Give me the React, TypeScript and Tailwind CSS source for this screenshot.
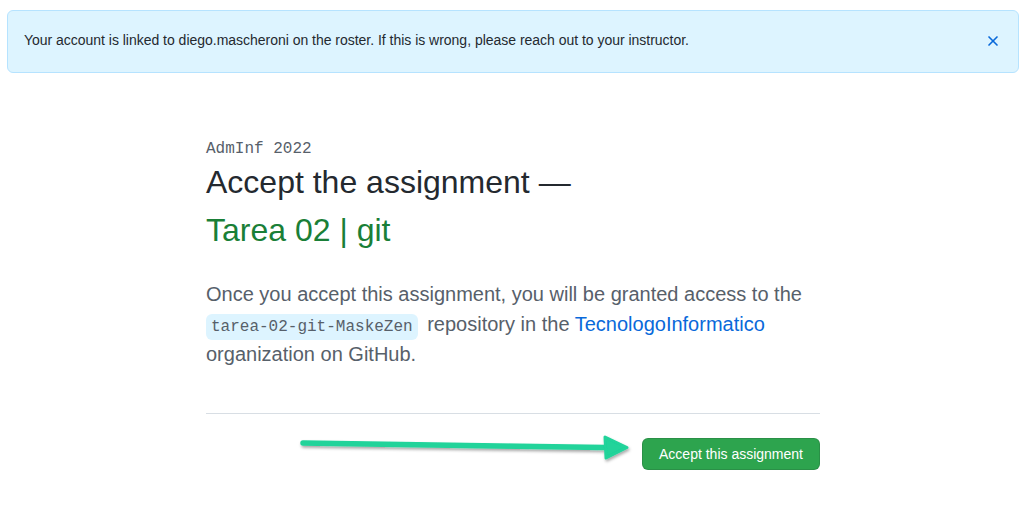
import { X } from "lucide-react";

const App = () => {
  return (
    <div className="min-h-screen bg-white" style={{ fontFamily: '"Liberation Sans", Arial, sans-serif' }}>
      {/* flash banner */}
      <div className="mt-[10px] ml-[7px] mr-[10px] h-[63px] flex items-center justify-between rounded-md border border-[#b6e3ff] bg-[#ddf4ff] pl-[16px] pr-[17px] pb-[2px]">
        <p className="text-[14px] tracking-[-0.02px] text-[#24292f]">
          Your account is linked to diego.mascheroni on the roster. If this is wrong, please reach out to your instructor.
        </p>
        <button className="text-[#0969da]" aria-label="Dismiss">
          <X size={16} strokeWidth={2.5} />
        </button>
      </div>

      <main className="w-[614px] ml-[206px] pt-[67px]">
        <p
          className="text-[16px] leading-[18px] text-[#57606a]"
          style={{ fontFamily: '"Liberation Mono", "Courier New", monospace' }}
        >
          AdmInf 2022
        </p>
        <h1 className="text-[32px] leading-[48px] text-[#24292f]">
          Accept the assignment —<br />
          <span className="text-[#1a7f37]">Tarea 02 | git</span>
        </h1>

        <p className="mt-[25px] text-[20px] leading-[30px] text-[#57606a]">
          Once you accept this assignment, you will be granted access to the{" "}
          <code
            className="rounded-md bg-[#ddf4ff] px-[5px] py-[4px] text-[16px] leading-none"
            style={{ fontFamily: '"Liberation Mono", "Courier New", monospace' }}
          >
            tarea-02-git-MaskeZen
          </code>
          {"  "}
          <span className="ml-[4px]">repository in the</span> <a className="text-[#0969da]">TecnologoInformatico</a>{" "}
          organization on GitHub.
        </p>

        <div className="mt-[44px] border-t border-[#d8dee4]" />

        <div className="relative mt-[24px] flex justify-end">
          <svg
            className="absolute left-[89px] top-[-8px]"
            width="350"
            height="36"
            viewBox="0 0 350 36"
          >
            <defs>
              <filter id="sh" x="-10%" y="-50%" width="120%" height="200%">
                <feDropShadow dx="1" dy="2" stdDeviation="1.5" floodColor="#000" floodOpacity="0.35" />
              </filter>
            </defs>
            <g filter="url(#sh)">
              <path d="M8 13 L310 17.5" stroke="#20d39a" strokeWidth="5.5" strokeLinecap="round" fill="none" />
              <path d="M310 7 L332 17.5 L311 28 Z" fill="#20d39a" stroke="#20d39a" strokeWidth="3" strokeLinejoin="round" />
            </g>
          </svg>
          <button className="h-[32px] rounded-md border border-[#1b1f24]/15 bg-[#2da44e] px-[16px] text-[14px] text-white">
            Accept this assignment
          </button>
        </div>
      </main>
    </div>
  );
};

export default App;
